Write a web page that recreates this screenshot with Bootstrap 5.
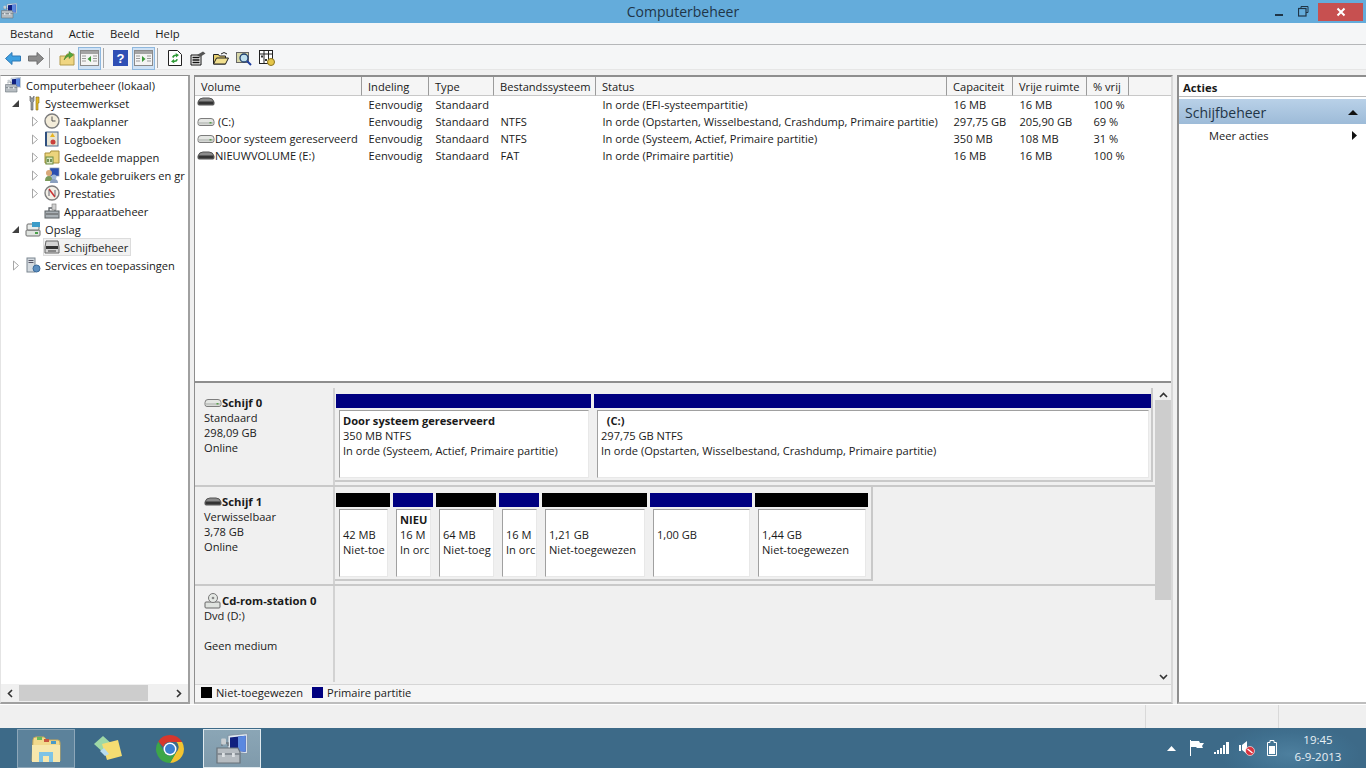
<!DOCTYPE html>
<html lang="nl">
<head>
    <meta charset="UTF-8">
    <meta name="viewport" content="width=device-width, initial-scale=1.0">
    <title>Computerbeheer</title>
    <link href="https://cdn.jsdelivr.net/npm/bootstrap@5.3.0/dist/css/bootstrap.min.css" rel="stylesheet">
    <style>
        html, body { height: 768px; overflow: hidden; }
        body { width: 1366px; font-family: "Open Sans", "Liberation Sans", sans-serif; font-size: 11.1px; line-height: 15px; color: #1a1a1a; background: #f0f0f0; }
        svg { display: block; flex: none; }

        .titlebar { height: 23px; background: #64acdb; }
        .titlebar .app-icon { margin: 3px 0 0 1px; }
        .titlebar .caption { left: 0; right: 0; top: 3px; font-size: 14px; line-height: 18px; color: #1f3547; text-align: center; }
        .win-btn { height: 17px; width: 25px; }
        .win-close { width: 45px; height: 18px; background: #c75050; margin: 0 3px 0 2px; }
        .menubar { height: 22px; background: #f5f6f7; border-bottom: 1px solid #b5b7b9; padding-left: 10px; font-size: 11.3px; }
        .menubar span { margin-right: 15.500px; }
        .toolbar { height: 25px; background: #f5f6f7; border-bottom: 1px solid #e6e6e6; padding: 2px 0 0 1px; }
        .tb { width: 23px; height: 23px; }
        .tb-on { background: #cfe2f5; outline: 1px solid #8fb8de; outline-offset: -1px; }
        .tb-sep { width: 1px; height: 20px; background: #a8a8a8; margin: 0 2px; }
        .tb-gap { margin-left: 3px; }

        .workspace { height: 634px; padding: 5px 0 0; }
        .pane { background: #fff; border: 2px solid #8e8e8e; border-right-color: #d8d8d8; border-bottom-color: #bdbdbd; }
        .tree { width: 190px; height: 629px; border-width: 1px 2px 2px 1px; border-color: #8e8e8e #a0a0a0 #a0a0a0 #e4e4e4; }
        .center { width: 979px; height: 629px; margin-left: 4px; border-left-width: 1px; }
        .actions { width: 189px; height: 629px; margin-left: 4px; border-right: 0; }

        .tree-row { height: 18px; white-space: nowrap; overflow: hidden; flex: none; }
        .l0 { padding-left: 4px; }
        .l1 { padding-left: 9px; }
        .l2 { padding-left: 28px; }
        .l0-lbl { margin-left: 1px; }
        .twisty { width: 11px; margin-right: 4px; }
        .tree-row svg.ic { margin-right: 4px; }
        .tree-sel { background: #f2f2f2; outline: 1px solid #dcdcdc; outline-offset: -1px; padding: 0 3px 0 1px; margin-left: -1px; height: 18px; }
        .hscroll { height: 18px; background: #f0f0f0; margin-top: auto; }
        .hscroll .thumb { width: 129px; height: 16px; background: #cdcdcd; }
        .hscroll .arr { width: 18px; }

        .list-area { height: 304px; flex: none; }
        .vol-table { table-layout: fixed; width: 976px; margin: 0; font-size: inherit; color: inherit; border-collapse: separate; border-spacing: 0; }
        .vol-table th { font-weight: 400; height: 19px; padding: 1px 0 0 6px; background: #f5f5f5; border-right: 1px solid #9b9b9b; border-bottom: 1px solid #c8c8c8; line-height: 16px; white-space: nowrap; overflow: hidden; }
        .vol-table th:last-child { border-right: 0; }
        .vol-table td { height: 17px; padding: 1px 0 0 6.500px; line-height: 16px; white-space: nowrap; overflow: hidden; border: 0; }
        .vol-table td.vol { padding-left: 2px; }
        .c1 { width: 167px; } .c2 { width: 67px; } .c3 { width: 65px; } .c4 { width: 102px; } .c5 { width: 351px; }
        .c6 { width: 66px; } .c7 { width: 74px; } .c8 { width: 42px; } .c9 { width: 42px; }

        .splitter { height: 4px; flex: none; background: #8e8e8e; border-bottom: 2px solid #f0f0f0; }
        .graph { height: 299px; flex: none; padding-top: 3px; background: #f0f0f0; }
        .disk-rows { width: 960px; }
        .disk-row { height: 99px; border-bottom: 2px solid #c9c9c9; }
        .disk-row.last { height: 96px; border-bottom: 0; }
        .disk-info { width: 140px; flex: none; padding: 7px 0 0 9px; border-right: 2px solid #d2d2d2; }
        .disk-title { font-weight: 700; font-size: 11.3px; height: 15px; }
        .disk-parts { padding: 6px 0 0 1px; gap: 3px; border-bottom: 2px solid #c9c9c9; border-right: 2px solid #c9c9c9; height: 94px; }
        .disk-parts-end { padding-right: 3px; }
        .part { height: 86px; flex: none; }
        .part-bar { height: 14px; }
        .bar-navy { background: #000080; }
        .bar-black { background: #000; }
        .part-body { height: 68px; margin: 2px 2px 0 3px; padding: 2px 0 0 3px; background: #fff; border: 1px solid #a0a0a0; border-right-color: #e8e8e8; border-bottom-color: #e8e8e8; overflow: hidden; white-space: nowrap; }
        .part-name { font-weight: 700; min-height: 15px; }
        .p-a { width: 255px; } .p-b { width: 557px; }
        .q-a { width: 54px; } .q-b { width: 40px; } .q-c { width: 60px; } .q-d { width: 40px; } .q-e { width: 105px; } .q-f { width: 102px; } .q-g { width: 113px; }
        .vscroll { width: 16px; height: 296px; background: #f0f0f0; }
        .vscroll .thumb { height: 200px; background: #cdcdcd; margin-top: 2px; }
        .legend { height: 18px; flex: none; padding: 0 0 2px 6px; border-top: 1px solid #d6d6d6; background: #f5f5f5; }
        .swatch { width: 11px; height: 11px; margin-right: 4px; }
        .swatch-next { margin-left: 9px; }

        .act-head { height: 20px; padding: 3px 0 0 4px; font-weight: 700; border-bottom: 1px solid #bbb; font-size: 11.3px; }
        .act-band { height: 25px; margin-top: 2px; padding: 1px 8px 0 6px; font-size: 14px; color: #1f3547; background: linear-gradient(#b9d1e8, #9dbbd8); }
        .act-item { height: 22px; padding: 0 9px 0 30px; }

        .statusbar { height: 24px; background: #f0f0f0; border-top: 1px solid #fff; }
        .st-cell { border-left: 1px solid #d9d9d9; height: 23px; }
        .st-a { width: 133px; } .st-b { width: 88px; }
        .taskbar { height: 40px; background: radial-gradient(ellipse 70px 30px at 1290px 26px, #4d7f9e 0, #3f6f8e 70%, transparent 100%), #3d6a88; color: #fff; }
        .task { width: 58px; height: 39px; margin-top: 1px; }
        .task + .task { margin-left: 4px; }
        .task-open { background: rgba(255,255,255,.16); outline: 1px solid rgba(255,255,255,.3); outline-offset: -1px; }
        .task-on { background: linear-gradient(#8ba6b6, #7f9aab); outline: 1px solid #dfe9ee; outline-offset: -1px; }
        .task-first { margin-left: 17px; }
        .tray-ic { width: 25px; }
        .clock { width: 68px; margin-right: 14px; text-align: center; font-size: 11.5px; line-height: 17px; color: #e8f0f5; }
    </style>
</head>
<body>
    <svg width="0" height="0" class="position-absolute">
        <defs>
            <symbol id="mgmt" viewBox="0 0 16 16">
                <path d="M6 1.200L15.700.3v10L6 9.400z" fill="#dfe8f0" stroke="#7f8f9f" stroke-width=".4"/>
                <path d="M7 2.200l7.800-.8v8L7 8.600z" fill="#10207f"/>
                <path d="M11 1.800l3.800-.4v8L11 9z" fill="#5a88e0"/>
                <path d="M3 6.500V5h3v1.500" fill="none" stroke="#6f7880" stroke-width=".7"/>
                <rect x="2.600" y="2.800" width="2.400" height="3" rx=".5" fill="#c9ced2"/>
                <path d="M.5 7.500h10.500l1 2v5.500H.5z" fill="#b6bcc1" stroke="#69727a" stroke-width=".6"/>
                <path d="M.8 10.500h11" stroke="#6b747c" stroke-width=".6"/>
                <rect x="3" y="10" width="1.400" height="2" fill="#dde1e4"/>
                <rect x="8" y="10" width="1.400" height="2" fill="#dde1e4"/>
            </symbol>
            <symbol id="disk-gray" viewBox="0 0 18 10">
                <path d="M1 4.5Q1 1.5 4 1.5h10q3 0 3 3v2q0 2-2 2H3q-2 0-2-2z" fill="#e4e6e3" stroke="#7d7d7d"/>
                <rect x="2" y="5" width="14" height="2.5" fill="#c5c8c5"/>
                <rect x="12.5" y="5" width="2" height="1.5" fill="#59a04c"/>
            </symbol>
            <symbol id="disk-dark" viewBox="0 0 18 10">
                <path d="M1 5Q2 1 6 1h6q4 0 5 4v2q0 1-1 1H2Q1 8 1 7z" fill="#8b8b8b" stroke="#555"/>
                <rect x="1.5" y="4.5" width="15" height="3" fill="#333"/>
            </symbol>
            <symbol id="twist-open" viewBox="0 0 9 9"><path d="M1 8h7V1z" fill="#404040"/></symbol>
            <symbol id="twist-closed" viewBox="0 0 9 11"><path d="M2.5 1v9l5-4.500z" fill="#fff" stroke="#a6a6a6"/></symbol>
        </defs>
    </svg>

    <div class="titlebar d-flex position-relative">
        <svg class="app-icon" width="16" height="16"><use href="#mgmt"/></svg>
        <div class="caption position-absolute">Computerbeheer</div>
        <div class="ms-auto d-flex align-items-center">
            <div class="win-btn d-flex align-items-center justify-content-center">
                <svg width="10" height="10" viewBox="0 0 10 10"><rect x="1" y="7" width="8" height="2" fill="#1f3547"/></svg>
            </div>
            <div class="win-btn d-flex align-items-center justify-content-center">
                <svg width="11" height="11" viewBox="0 0 11 11" fill="none" stroke="#1f3547"><path d="M3 2.500V.5h7v6H8"/><rect x=".5" y="2.500" width="7.500" height="7.500" stroke-width="1.200"/></svg>
            </div>
            <div class="win-close d-flex align-items-center justify-content-center">
                <svg width="10" height="10" viewBox="0 0 10 10" stroke="#fff" stroke-width="2"><path d="M1.500 1.500l7 7M8.500 1.500l-7 7"/></svg>
            </div>
        </div>
    </div>

    <div class="menubar d-flex align-items-center">
        <span>Bestand</span><span>Actie</span><span>Beeld</span><span>Help</span>
    </div>

    <div class="toolbar d-flex align-items-center">
        <div class="tb d-flex align-items-center justify-content-center">
            <svg width="16" height="13" viewBox="0 0 16 13"><path d="M7 .5L.5 6.500 7 12.500V9h8.500V4H7z" fill="#3d9fe0" stroke="#2f79b5"/></svg>
        </div>
        <div class="tb d-flex align-items-center justify-content-center">
            <svg width="16" height="13" viewBox="0 0 16 13"><path d="M9 .5l6.500 6L9 12.500V9H.5V4H9z" fill="#8c8c8c" stroke="#6f6f6f"/></svg>
        </div>
        <div class="tb-sep"></div>
        <div class="tb tb-gap d-flex align-items-center justify-content-center">
            <svg width="16" height="16" viewBox="0 0 16 16"><path d="M1 6h6l1-2h7v11H1z" fill="#f0d682" stroke="#b29a4a"/><path d="M5 10q1-5 5-6V1.500L14.500 5 10 8.500V6q-3 1-5 4z" fill="#55a83c" stroke="#3a7a28" stroke-width=".5"/></svg>
        </div>
        <div class="tb tb-on d-flex align-items-center justify-content-center">
            <svg width="19" height="16" viewBox="0 0 19 16"><rect x=".5" y=".5" width="18" height="15" fill="#f4f4f4" stroke="#8a8a8a"/><rect x="1" y="1" width="17" height="3" fill="#a4a4a4"/><path d="M2 6h4M2 8.500h4M2 11h4M13 6h4M13 8.500h4M13 11h4" stroke="#9a9a9a"/><path d="M11 6v6L7.500 9z" fill="#3d9a3a"/></svg>
        </div>
        <div class="tb-sep"></div>
        <div class="tb tb-gap d-flex align-items-center justify-content-center">
            <svg width="15" height="16" viewBox="0 0 15 16"><rect width="15" height="16" fill="#2f4fb5"/><text x="7.500" y="13" text-anchor="middle" font-family="Liberation Sans" font-weight="700" font-size="13" fill="#fff">?</text></svg>
        </div>
        <div class="tb tb-on d-flex align-items-center justify-content-center">
            <svg width="19" height="16" viewBox="0 0 19 16"><rect x=".5" y=".5" width="18" height="15" fill="#f4f4f4" stroke="#8a8a8a"/><rect x="1" y="1" width="17" height="3" fill="#a4a4a4"/><path d="M2 6h4M2 8.500h4M2 11h4M13 6h4M13 8.500h4M13 11h4" stroke="#9a9a9a"/><path d="M8 6v6l3.500-3z" fill="#3d9a3a"/></svg>
        </div>
        <div class="tb-sep"></div>
        <div class="tb tb-gap d-flex align-items-center justify-content-center">
            <svg width="14" height="16" viewBox="0 0 14 16"><path d="M.5.5h9l4 4v11H.5z" fill="#fff" stroke="#222"/><path d="M4 7q1-3 4-2.500L7.500 3 11 5 8 7.500V6Q6 6 5.500 8zM10 9.500q-1 3-4 2.500l.5 1.500L3 11.500 6 9v1.500q2 0 2.500-1.500z" fill="#2e9b36"/></svg>
        </div>
        <div class="tb d-flex align-items-center justify-content-center">
            <svg width="16" height="15" viewBox="0 0 16 15"><path d="M1 4h10v10H1z" fill="#f5f5f5" stroke="#111"/><path d="M2.500 6.500h7M2.500 9h7M2.500 11.500h7" stroke="#111" stroke-width="1.500"/><path d="M7 4l6-3.500 2.500 2L10 6z" fill="#555"/></svg>
        </div>
        <div class="tb d-flex align-items-center justify-content-center">
            <svg width="16" height="14" viewBox="0 0 16 14"><path d="M.5 13V3.500h5l1 1.500h6v8z" fill="#e6cf6e" stroke="#222"/><path d="M.5 13l3-6h12l-3 6z" fill="#f2e08e" stroke="#222"/><path d="M8 3q3-3 6 0" fill="none" stroke="#222"/></svg>
        </div>
        <div class="tb d-flex align-items-center justify-content-center">
            <svg width="16" height="16" viewBox="0 0 16 16"><rect x=".5" y="2.500" width="12" height="10" fill="#d7d7a8" stroke="#666"/><circle cx="8" cy="8" r="4" fill="#bfe0ee" stroke="#1f3f6f" stroke-width="1.300"/><path d="M11 11l4 4" stroke="#1f3f9f" stroke-width="2"/></svg>
        </div>
        <div class="tb d-flex align-items-center justify-content-center">
            <svg width="16" height="16" viewBox="0 0 16 16"><rect x=".5" y=".5" width="13" height="13" fill="#fff" stroke="#222"/><path d="M.5 4h13M5 .5v13M9.500.5v13" stroke="#222"/><rect x="2" y="5.500" width="2" height="2" fill="#333"/><rect x="6" y="9" width="2" height="2" fill="#333"/><circle cx="12" cy="12" r="3.500" fill="#e5c64a" stroke="#8a7420"/></svg>
        </div>
    </div>

    <div class="workspace d-flex">
        <div class="pane tree d-flex flex-column">
            <div class="tree-row l0 d-flex align-items-center"><svg class="ic" width="16" height="16"><use href="#mgmt"/></svg><span class="l0-lbl">Computerbeheer (lokaal)</span></div>
            <div class="tree-row l1 d-flex align-items-center"><svg class="twisty" width="9" height="9"><use href="#twist-open"/></svg><svg class="ic" width="16" height="16" viewBox="0 0 16 16"><path d="M5 1v5l1 1v8h2V7l1-1V1L8 3H6z" fill="#9aa0a6" stroke="#555" stroke-width=".6"/><path d="M11 2h3v6h-1v7h-2V8z" fill="#e2b928" stroke="#8a6d10" stroke-width=".6"/></svg><span>Systeemwerkset</span></div>
            <div class="tree-row l2 d-flex align-items-center"><svg class="twisty" width="9" height="11"><use href="#twist-closed"/></svg><svg class="ic" width="16" height="16" viewBox="0 0 16 16"><circle cx="8" cy="8" r="7" fill="#f3ecd9" stroke="#7d7d7d" stroke-width="1.400"/><path d="M8 3.500V8h3.500" fill="none" stroke="#555"/></svg><span>Taakplanner</span></div>
            <div class="tree-row l2 d-flex align-items-center"><svg class="twisty" width="9" height="11"><use href="#twist-closed"/></svg><svg class="ic" width="16" height="16" viewBox="0 0 16 16"><rect x="2" y="1" width="12" height="14" fill="#e8e4d2" stroke="#4f6a8f"/><path d="M2 1v14" stroke="#2f4f7f" stroke-width="2"/><path d="M8.500 2l2.500 4H6z" fill="#e6b422"/><circle cx="9" cy="11" r="2.500" fill="#c9403c"/></svg><span>Logboeken</span></div>
            <div class="tree-row l2 d-flex align-items-center"><svg class="twisty" width="9" height="11"><use href="#twist-closed"/></svg><svg class="ic" width="16" height="16" viewBox="0 0 16 16"><path d="M1 4h5l1-2h8v12H1z" fill="#ecd47c" stroke="#a8903c"/><rect x="2" y="8" width="7" height="7" fill="#d9e6c2" stroke="#6a8a3c"/><path d="M4 10v3M7 10v3" stroke="#3f6a1f" stroke-width="1.300"/></svg><span>Gedeelde mappen</span></div>
            <div class="tree-row l2 d-flex align-items-center"><svg class="twisty" width="9" height="11"><use href="#twist-closed"/></svg><svg class="ic" width="16" height="16" viewBox="0 0 16 16"><rect x="6" y="1" width="9" height="8" fill="#2a4fb0" stroke="#8a9ab0" stroke-width=".7"/><circle cx="5" cy="6" r="3" fill="#d8a878"/><path d="M1 14q0-5 4-5t4 5z" fill="#7a9a5a"/><circle cx="10" cy="10" r="2.500" fill="#9fb8d8"/><path d="M6 16q0-4 4-4t4 4z" fill="#8aa0bf"/></svg><span>Lokale gebruikers en gr</span></div>
            <div class="tree-row l2 d-flex align-items-center"><svg class="twisty" width="9" height="11"><use href="#twist-closed"/></svg><svg class="ic" width="16" height="16" viewBox="0 0 16 16"><circle cx="8" cy="8" r="7" fill="#f2efe6" stroke="#7d7d7d" stroke-width="1.400"/><path d="M5 4l6 8" stroke="#c33" stroke-width="1.600"/><path d="M5 5v6M11 5v6" stroke="#445" stroke-width=".8"/></svg><span>Prestaties</span></div>
            <div class="tree-row l2 d-flex align-items-center"><span class="twisty"></span><svg class="ic" width="16" height="16" viewBox="0 0 16 16"><rect x="1" y="8" width="14" height="7" fill="#a9b0b5" stroke="#5b6065"/><path d="M5 8V5h6v3" fill="none" stroke="#5b6065" stroke-width="1.300"/><rect x="8" y="1" width="4" height="6" fill="#d0d0d0" stroke="#777" stroke-width=".6"/><path d="M2 11h12" stroke="#555"/></svg><span>Apparaatbeheer</span></div>
            <div class="tree-row l1 d-flex align-items-center"><svg class="twisty" width="9" height="9"><use href="#twist-open"/></svg><svg class="ic" width="16" height="16" viewBox="0 0 16 16"><rect x="1" y="9" width="14" height="6" rx="1" fill="#dfe3df" stroke="#6d6d6d"/><rect x="2" y="3" width="12" height="6" rx="1" fill="#e9ecea" stroke="#6d6d6d"/><rect x="7" y="1" width="8" height="5" fill="#3d9cc8"/><rect x="10" y="11" width="3" height="2" fill="#4aa04a"/></svg><span>Opslag</span></div>
            <div class="tree-row l2 d-flex align-items-center"><span class="twisty"></span><div class="tree-sel d-flex align-items-center"><svg class="ic" width="16" height="16" viewBox="0 0 16 16"><path d="M2 2h12l1 6v6H1V8z" fill="#d4d4d4" stroke="#666"/><rect x="2" y="7" width="12" height="3" fill="#333"/><rect x="4" y="11" width="8" height="2" fill="#888"/></svg><span>Schijfbeheer</span></div></div>
            <div class="tree-row l1 d-flex align-items-center"><svg class="twisty" width="9" height="11"><use href="#twist-closed"/></svg><svg class="ic" width="16" height="16" viewBox="0 0 16 16"><rect x="2" y="1" width="8" height="14" fill="#d5dbe0" stroke="#7b8690"/><path d="M3.500 3.500h5M3.500 5.500h5" stroke="#556"/><circle cx="11.500" cy="11.500" r="3.500" fill="#5d8fc0" stroke="#3a6a9a"/></svg><span>Services en toepassingen</span></div>
            <div class="hscroll d-flex align-items-center">
                <div class="arr d-flex justify-content-center"><svg width="6" height="9" viewBox="0 0 6 9" fill="none" stroke="#333" stroke-width="1.600"><path d="M5 1L1.500 4.500 5 8"/></svg></div>
                <div class="thumb"></div>
                <div class="arr ms-auto d-flex justify-content-center"><svg width="6" height="9" viewBox="0 0 6 9" fill="none" stroke="#333" stroke-width="1.600"><path d="M1 1l3.500 3.500L1 8"/></svg></div>
            </div>
        </div>

        <div class="pane center d-flex flex-column">
            <div class="list-area overflow-hidden">
                <table class="table vol-table">
                    <colgroup><col class="c1"><col class="c2"><col class="c3"><col class="c4"><col class="c5"><col class="c6"><col class="c7"><col class="c8"><col class="c9"></colgroup>
                    <thead>
                        <tr><th>Volume</th><th>Indeling</th><th>Type</th><th>Bestandssysteem</th><th>Status</th><th>Capaciteit</th><th>Vrije ruimte</th><th>% vrij</th><th></th></tr>
                    </thead>
                    <tbody>
                        <tr><td class="vol"><svg width="18" height="10"><use href="#disk-dark"/></svg></td><td>Eenvoudig</td><td>Standaard</td><td></td><td>In orde (EFI-systeempartitie)</td><td>16 MB</td><td>16 MB</td><td>100 %</td><td></td></tr>
                        <tr><td class="vol"><div class="d-flex align-items-center"><svg width="18" height="10"><use href="#disk-gray"/></svg><span>&nbsp;(C:)</span></div></td><td>Eenvoudig</td><td>Standaard</td><td>NTFS</td><td>In orde (Opstarten, Wisselbestand, Crashdump, Primaire partitie)</td><td>297,75 GB</td><td>205,90 GB</td><td>69 %</td><td></td></tr>
                        <tr><td class="vol"><div class="d-flex align-items-center"><svg width="18" height="10"><use href="#disk-gray"/></svg><span>Door systeem gereserveerd</span></div></td><td>Eenvoudig</td><td>Standaard</td><td>NTFS</td><td>In orde (Systeem, Actief, Primaire partitie)</td><td>350 MB</td><td>108 MB</td><td>31 %</td><td></td></tr>
                        <tr><td class="vol"><div class="d-flex align-items-center"><svg width="18" height="10"><use href="#disk-dark"/></svg><span>NIEUWVOLUME (E:)</span></div></td><td>Eenvoudig</td><td>Standaard</td><td>FAT</td><td>In orde (Primaire partitie)</td><td>16 MB</td><td>16 MB</td><td>100 %</td><td></td></tr>
                    </tbody>
                </table>
            </div>
            <div class="splitter"></div>
            <div class="graph d-flex">
                <div class="disk-rows">
                    <div class="disk-row d-flex">
                        <div class="disk-info">
                            <div class="disk-title d-flex align-items-center"><svg width="18" height="10"><use href="#disk-gray"/></svg><span>Schijf 0</span></div>
                            <div>Standaard</div><div>298,09 GB</div><div>Online</div>
                        </div>
                        <div class="disk-parts d-flex">
                            <div class="part p-a"><div class="part-bar bar-navy"></div><div class="part-body"><div class="part-name">Door systeem gereserveerd</div><div>350 MB NTFS</div><div>In orde (Systeem, Actief, Primaire partitie)</div></div></div>
                            <div class="part p-b"><div class="part-bar bar-navy"></div><div class="part-body"><div class="part-name">&nbsp;&nbsp;(C:)</div><div>297,75 GB NTFS</div><div>In orde (Opstarten, Wisselbestand, Crashdump, Primaire partitie)</div></div></div>
                        </div>
                    </div>
                    <div class="disk-row d-flex">
                        <div class="disk-info">
                            <div class="disk-title d-flex align-items-center"><svg width="18" height="10"><use href="#disk-dark"/></svg><span>Schijf 1</span></div>
                            <div>Verwisselbaar</div><div>3,78 GB</div><div>Online</div>
                        </div>
                        <div class="disk-parts disk-parts-end d-flex">
                            <div class="part q-a"><div class="part-bar bar-black"></div><div class="part-body"><div class="part-name"></div><div>42 MB</div><div>Niet-toe</div></div></div>
                            <div class="part q-b"><div class="part-bar bar-navy"></div><div class="part-body"><div class="part-name">NIEU</div><div>16 M</div><div>In orc</div></div></div>
                            <div class="part q-c"><div class="part-bar bar-black"></div><div class="part-body"><div class="part-name"></div><div>64 MB</div><div>Niet-toeg</div></div></div>
                            <div class="part q-d"><div class="part-bar bar-navy"></div><div class="part-body"><div class="part-name"></div><div>16 M</div><div>In orc</div></div></div>
                            <div class="part q-e"><div class="part-bar bar-black"></div><div class="part-body"><div class="part-name"></div><div>1,21 GB</div><div>Niet-toegewezen</div></div></div>
                            <div class="part q-f"><div class="part-bar bar-navy"></div><div class="part-body"><div class="part-name"></div><div>1,00 GB</div></div></div>
                            <div class="part q-g"><div class="part-bar bar-black"></div><div class="part-body"><div class="part-name"></div><div>1,44 GB</div><div>Niet-toegewezen</div></div></div>
                        </div>
                    </div>
                    <div class="disk-row last d-flex">
                        <div class="disk-info">
                            <div class="disk-title d-flex align-items-center"><svg width="18" height="16" viewBox="0 0 18 16"><rect x="1" y="9" width="15" height="6" rx="1" fill="#dfe3df" stroke="#666"/><circle cx="9" cy="5" r="4.500" fill="#e4e8e4" stroke="#777"/><circle cx="9" cy="5" r="1.300" fill="#888"/></svg><span>Cd-rom-station 0</span></div>
                            <div>Dvd (D:)</div><div>&nbsp;</div><div>Geen medium</div>
                        </div>
                    </div>
                </div>
                <div class="vscroll d-flex flex-column">
                    <div class="d-flex justify-content-center pt-1"><svg width="9" height="6" viewBox="0 0 9 6" fill="none" stroke="#333" stroke-width="1.600"><path d="M1 5l3.500-3.500L8 5"/></svg></div>
                    <div class="thumb"></div>
                    <div class="mt-auto d-flex justify-content-center pb-1"><svg width="9" height="6" viewBox="0 0 9 6" fill="none" stroke="#333" stroke-width="1.600"><path d="M1 1l3.500 3.500L8 1"/></svg></div>
                </div>
            </div>
            <div class="legend d-flex align-items-center">
                <div class="swatch bar-black"></div><span>Niet-toegewezen</span>
                <div class="swatch swatch-next bar-navy"></div><span>Primaire partitie</span>
            </div>
        </div>

        <div class="pane actions">
            <div class="act-head">Acties</div>
            <div class="act-band d-flex align-items-center justify-content-between">
                <span>Schijfbeheer</span>
                <svg width="10" height="6" viewBox="0 0 10 6"><path d="M0 6l5-5 5 5z" fill="#111"/></svg>
            </div>
            <div class="act-item d-flex align-items-center justify-content-between">
                <span>Meer acties</span>
                <svg width="5" height="9" viewBox="0 0 5 9"><path d="M0 0l5 4.500L0 9z" fill="#111"/></svg>
            </div>
        </div>
    </div>

    <div class="statusbar d-flex justify-content-end">
        <div class="st-cell st-a"></div>
        <div class="st-cell st-b"></div>
    </div>

    <div class="taskbar d-flex">
        <div class="task task-first task-open d-flex align-items-center justify-content-center">
            <svg width="32" height="30" viewBox="0 0 32 30"><path d="M3 6q0-3 3-3h8l3 3h11q2 0 2 3v18H2z" fill="#f2d98c" stroke="#c7a95a"/><rect x="7" y="3" width="5" height="3" fill="#6aba5a"/><rect x="14" y="5" width="5" height="3" fill="#c8553f"/><rect x="21" y="7" width="5" height="3" fill="#4a9ac8"/><path d="M2 11h28v17H2z" fill="#f7e7ac"/><path d="M9 28V18h14v10h-4v-6h-6v6z" fill="#7dc3e6"/></svg>
        </div>
        <div class="task d-flex align-items-center justify-content-center">
            <svg width="32" height="30" viewBox="0 0 32 30"><path d="M2 10L11 2l10 9-8 9z" fill="#9ed8a6"/><path d="M12 9l16-4 4 16-15 4z" transform="translate(-2 1)" fill="#f5dd72"/><path d="M8 17l5 5 4-2-5-6z" fill="#b7dcef"/></svg>
        </div>
        <div class="task d-flex align-items-center justify-content-center">
            <svg width="30" height="30" viewBox="0 0 30 30">
                <path d="M15 1a14 14 0 0 1 12.100 7H15a7 7 0 0 0-6.700 4.900L3.300 7.400A14 14 0 0 1 15 1z" fill="#d8372c"/>
                <path d="M27.100 8A14 14 0 0 1 15 29l6.100-10.500A7 7 0 0 0 21.500 8z" fill="#f4c430"/>
                <path d="M15 29A14 14 0 0 1 3.300 7.400l6 10.600A7 7 0 0 0 15 22l6-3.500z" fill="#3da648"/>
                <circle cx="15" cy="15" r="6.500" fill="#fff"/><circle cx="15" cy="15" r="5" fill="#3b7fd0"/>
            </svg>
        </div>
        <div class="task task-on d-flex align-items-center justify-content-center">
            <svg width="34" height="32" viewBox="0 0 16 16"><use href="#mgmt"/></svg>
        </div>
        <div class="ms-auto d-flex align-items-center">
            <div class="tray-ic d-flex justify-content-center"><svg width="9" height="5" viewBox="0 0 9 5"><path d="M0 5l4.500-5L9 5z" fill="#fff"/></svg></div>
            <div class="tray-ic d-flex justify-content-center"><svg width="16" height="16" viewBox="0 0 16 16"><path d="M1.500 0v16" stroke="#fff"/><path d="M2 1h8l1 2h4l-2 3 1 2H8L7 7H2z" fill="#fff"/></svg></div>
            <div class="tray-ic d-flex justify-content-center"><svg width="16" height="14" viewBox="0 0 16 14" fill="#fff"><rect x="0" y="11" width="2" height="2"/><rect x="3" y="9" width="2" height="4"/><rect x="6" y="7" width="2" height="6"/><rect x="9" y="4" width="2" height="9"/><rect x="12" y="1" width="3" height="12"/></svg></div>
            <div class="tray-ic d-flex justify-content-center"><svg width="16" height="16" viewBox="0 0 16 16"><path d="M0 5h2v6H0zM3 5l5-4v13l-5-4z" fill="#fff"/><circle cx="11" cy="11" r="4.500" fill="#d8333f" stroke="#fff" stroke-width=".6"/><path d="M8.500 9l5 4" stroke="#fff" stroke-width="1.300"/></svg></div>
            <div class="tray-ic d-flex justify-content-center"><svg width="10" height="16" viewBox="0 0 10 16"><path d="M3 .5h4v2h2.500v13H.5v-13H3z" fill="none" stroke="#fff"/><rect x="2" y="6" width="6" height="8" fill="#fff"/></svg></div>
            <div class="clock"><div>19:45</div><div>6-9-2013</div></div>
        </div>
    </div>

    <script src="https://cdn.jsdelivr.net/npm/bootstrap@5.3.0/dist/js/bootstrap.bundle.min.js"></script>
</body>
</html>
